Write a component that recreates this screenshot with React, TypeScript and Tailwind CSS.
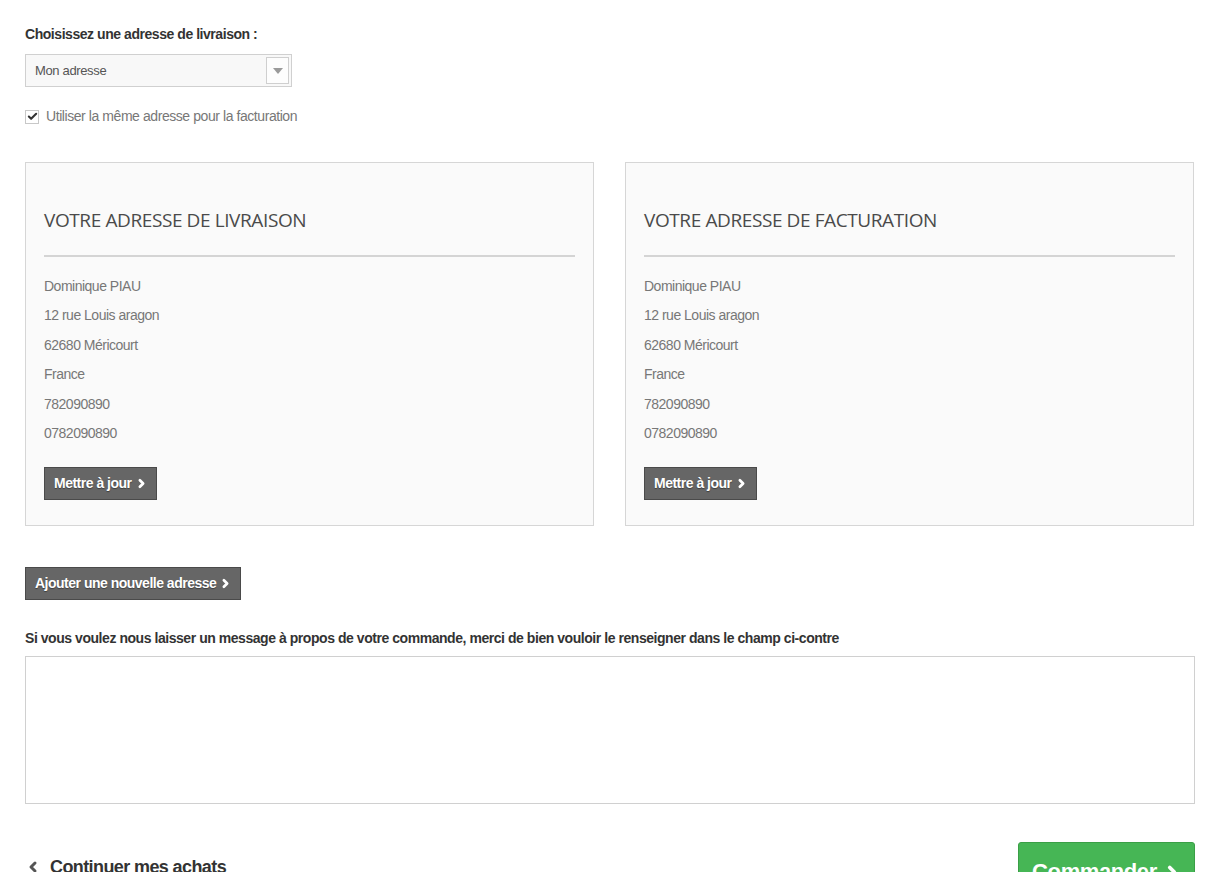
import { ChevronLeft, ChevronRight, Check } from 'lucide-react'

const ADDRESS = ['Dominique PIAU', '12 rue Louis aragon', '62680 Méricourt', 'France', '782090890', '0782090890']

function GreyButton({ label }: { label: string }) {
  return (
    <button className="flex h-[33px] items-center gap-[3px] border border-[#4a4a4a] bg-[#666666] pl-[9px] pr-[8px] text-[14px] font-bold tracking-[-0.5px] text-white [text-shadow:0_1px_1px_rgba(0,0,0,0.4)]">
      {label}
      <ChevronRight size={13} strokeWidth={5} />
    </button>
  )
}

function AddressCard({ title }: { title: string }) {
  return (
    <div className="border border-[#d6d6d6] bg-[#fafafa] px-[18px] pb-[25px] pt-[43px]">
      <h3 className="font-['Open_Sans',sans-serif] text-[19px] font-normal tracking-[-0.4px] text-[#4a4a4a]">{title}</h3>
      <div className="mt-[20px] h-[2px] bg-[#d4d4d4]" />
      <ul className="mt-[15px] text-[14px] leading-[29.5px] tracking-[-0.5px] text-[#777777]">
        {ADDRESS.map(line => (
          <li key={line}>{line}</li>
        ))}
      </ul>
      <div className="mt-[18px]">
        <GreyButton label="Mettre à jour" />
      </div>
    </div>
  )
}

export default function App() {
  return (
    <div className="min-h-[872px] bg-white pl-[25px] pt-[24px] font-['Liberation_Sans',Arial,sans-serif]">
      <div className="w-[1170px]">
        <p className="text-[14px] font-bold tracking-[-0.45px] text-[#333333]">Choisissez une adresse de livraison :</p>

        <div className="mt-[9px] flex h-[33px] w-[267px] items-center border border-[#d0d0d0] bg-[#f8f8f8] pl-[9px] pr-[2px]">
          <span className="flex-1 text-[13px] tracking-[-0.35px] text-[#555555]">Mon adresse</span>
          <span className="flex h-[27px] w-[23px] items-center justify-center border border-[#cfcfcf] bg-[#fdfdfd]">
            <span className="h-0 w-0 border-x-[5px] border-t-[6px] border-x-transparent border-t-[#9a9a9a]" />
          </span>
        </div>

        <label className="mt-[19px] flex items-center gap-[7px] text-[14px] tracking-[-0.43px] text-[#777777]">
          <span className="flex h-[14px] w-[14px] items-center justify-center border border-[#c8c8c8] bg-white">
            <Check size={11} strokeWidth={4.5} className="text-[#333333]" />
          </span>
          Utiliser la même adresse pour la facturation
        </label>

        <div className="mt-[35px] grid grid-cols-[569px_569px] gap-[31px]">
          <AddressCard title="VOTRE ADRESSE DE LIVRAISON" />
          <AddressCard title="VOTRE ADRESSE DE FACTURATION" />
        </div>

        <div className="mt-[41px]">
          <GreyButton label="Ajouter une nouvelle adresse" />
        </div>

        <p className="mt-[28px] text-[14px] font-bold tracking-[-0.45px] text-[#333333]">
          Si vous voulez nous laisser un message à propos de votre commande, merci de bien vouloir le renseigner dans le champ ci-contre
        </p>

        <textarea className="mt-[7px] block h-[148px] w-full resize-none border border-[#d0d0d0] bg-white outline-none" />

        <div className="mt-[38px] flex items-start justify-between">
          <a className="mt-[14px] flex items-center gap-[9px] text-[18px] font-bold leading-[22px] tracking-[-0.6px] text-[#333333]">
            <ChevronLeft size={16} strokeWidth={4.5} className="text-[#555555]" />
            Continuer mes achats
          </a>
          <button className="flex h-[56px] w-[177px] items-center justify-center gap-[6px] rounded-t-[3px] border border-[#3a9f46] bg-[#46b655] pt-[4px] text-[22px] font-bold tracking-[-0.4px] text-white">
            Commander
            <ChevronRight size={18} strokeWidth={5} />
          </button>
        </div>
      </div>
    </div>
  )
}
